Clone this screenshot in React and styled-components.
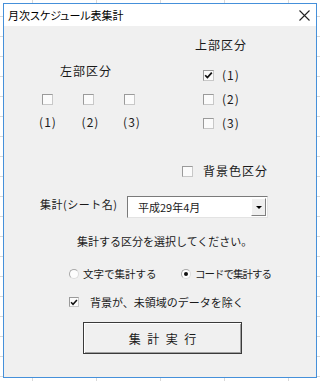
import React from "react";
import styled, { createGlobalStyle } from "styled-components";

const Global = createGlobalStyle`
  html, body {
    margin: 0;
    padding: 0;
    width: 320px;
    height: 381px;
    overflow: hidden;
  }
  body {
    background-color: #ffffff;
    background-image:
      repeating-linear-gradient(to right, transparent 0 32px, #d9d9d9 32px 33px, transparent 33px 64px),
      repeating-linear-gradient(to bottom, transparent 0 16px, #d9d9d9 16px 17px, transparent 17px 20px);
    font-family: "Noto Sans CJK JP", "Noto Sans", sans-serif;
    color: #1a1a1a;
  }
`;

const Window = styled.div`
  margin: 3px 0 0 3px;
  width: 314px;
  height: 375px;
  box-sizing: border-box;
  border: 1px solid #4590da;
  background: #f0f0f0;
  display: flex;
  flex-direction: column;
`;

const TitleBar = styled.div`
  height: 22px;
  flex: none;
  background: #ffffff;
  display: flex;
  align-items: center;
  justify-content: space-between;
  padding: 0 6px 0 4px;
`;

const Title = styled.span`
  font-size: 11px;
  line-height: 14px;
  font-feature-settings: "palt";
  color: #000;
`;

const CloseIcon = styled.svg`
  width: 11px;
  height: 11px;
  display: block;
`;

const Client = styled.div`
  flex: 1;
  display: flex;
  flex-direction: column;
`;

const TopGroups = styled.div`
  height: 109px;
  display: flex;
  align-items: flex-start;
  flex: none;
`;

const LeftGroup = styled.div`
  margin: 37px 0 0 23px;
  width: 123px;
  display: flex;
  flex-direction: column;
`;

const RightGroup = styled.div`
  margin: 11px 0 0 45px;
  display: flex;
  flex-direction: column;
`;

const Heading = styled.div`
  font-size: 12px;
  letter-spacing: 1px;
  line-height: 16px;
  height: 16px;
  padding-left: ${(p) => p.$pl || 0}px;
  white-space: nowrap;
`;

const CheckGrid = styled.div`
  margin-top: 12px;
  display: grid;
  grid-template-columns: repeat(3, 41px);
  grid-template-rows: 16px 16px;
  row-gap: 7px;
  justify-items: center;
  align-items: center;
`;

const SmallLabel = styled.span`
  font-size: 12px;
  letter-spacing: 1px;
  line-height: 16px;
  padding-left: ${(p) => p.$pl || 0}px;
  white-space: nowrap;
`;

const OptionList = styled.div`
  margin-top: 10px;
  display: flex;
  flex-direction: column;
`;

const OptionRow = styled.div`
  height: 24px;
  display: flex;
  align-items: center;
  gap: 8px;
  padding-left: 8px;
`;

const Row = styled.div`
  flex: none;
  height: ${(p) => p.$h}px;
  margin-top: ${(p) => p.$mt}px;
  padding-left: ${(p) => p.$pl}px;
  display: flex;
  align-items: center;
  gap: ${(p) => p.$gap || 0}px;
`;

const BoxEl = styled.span`
  flex: none;
  width: ${(p) => p.$size || 11}px;
  height: ${(p) => p.$size || 11}px;
  box-sizing: border-box;
  border: 1px solid #9a9a9a;
  border-right-color: #c8c8c8;
  border-bottom-color: #c8c8c8;
  background: #fbfbfb;
  display: flex;
  align-items: center;
  justify-content: center;
`;

const CheckSvg = styled.svg`
  width: 9px;
  height: 9px;
  display: block;
`;

function CheckBox({ checked, size }) {
  return (
    <BoxEl $size={size}>
      {checked && (
        <CheckSvg viewBox="0 0 9 9">
          <path d="M1.2 4.2 L3.4 6.6 L7.8 1.6" fill="none" stroke="#111" strokeWidth="1.7" />
        </CheckSvg>
      )}
    </BoxEl>
  );
}

const RadioEl = styled.span`
  flex: none;
  width: 10px;
  height: 10px;
  box-sizing: border-box;
  border-radius: 50%;
  border: 1px solid #a8a8a8;
  border-right-color: #dcdcdc;
  border-bottom-color: #dcdcdc;
  background: #fdfdfd;
  display: flex;
  align-items: center;
  justify-content: center;
  &::after {
    content: "";
    width: 4px;
    height: 4px;
    border-radius: 50%;
    background: ${(p) => (p.$on ? "#111" : "transparent")};
  }
`;

const RadioItem = styled.label`
  display: flex;
  align-items: center;
  gap: 4px;
  width: ${(p) => (p.$w ? `${p.$w}px` : "auto")};
`;

const Text = styled.span`
  font-size: ${(p) => p.$fs || 11}px;
  letter-spacing: ${(p) => p.$ls || 0}px;
  line-height: 16px;
  white-space: nowrap;
`;

const SheetLabel = styled.span`
  width: 87px;
  font-size: 11px;
  letter-spacing: 0.5px;
  line-height: 16px;
  margin-bottom: 6px;
  white-space: nowrap;
`;

const Combo = styled.div`
  width: 141px;
  height: 22px;
  box-sizing: border-box;
  border: 1px solid #7a7a7a;
  border-right-color: #e3e3e3;
  border-bottom-color: #e3e3e3;
  background: #ffffff;
  display: flex;
  align-items: center;
  justify-content: space-between;
  padding: 0 1px 0 10px;
`;

const ComboText = styled.span`
  font-size: 11px;
  line-height: 16px;
  white-space: nowrap;
`;

const DropButton = styled.span`
  width: 15px;
  height: 18px;
  box-sizing: border-box;
  background: #f0f0f0;
  border: 1px solid #ffffff;
  border-right-color: #808080;
  border-bottom-color: #808080;
  display: flex;
  align-items: center;
  justify-content: center;
  &::after {
    content: "";
    width: 0;
    height: 0;
    border-left: 3px solid transparent;
    border-right: 3px solid transparent;
    border-top: 3px solid #000;
    margin-top: 1px;
  }
`;

const RunButton = styled.button`
  width: 159px;
  height: 32px;
  box-sizing: border-box;
  border: 1px solid #3a3a3a;
  box-shadow: inset 1px 1px 0 #ffffff, inset -1px -1px 0 #a0a0a0;
  background: #f0f0f0;
  font-family: "Noto Sans CJK JP", "Noto Sans", sans-serif;
  font-size: 12px;
  letter-spacing: 6.5px;
  padding: 0 0 0 6.5px;
  color: #1a1a1a;
  cursor: pointer;
`;

export default function App() {
  return (
    <>
      <Global />
      <Window>
        <TitleBar>
          <Title>月次スケジュール表集計</Title>
          <CloseIcon viewBox="0 0 11 11">
            <path d="M0.5 0.5 L10.5 10.5 M10.5 0.5 L0.5 10.5" stroke="#222" strokeWidth="1.1" fill="none" />
          </CloseIcon>
        </TitleBar>
        <Client>
          <TopGroups>
            <LeftGroup>
              <Heading $pl={33}>左部区分</Heading>
              <CheckGrid>
                <CheckBox />
                <CheckBox />
                <CheckBox />
                <SmallLabel $pl={1}>(1)</SmallLabel>
                <SmallLabel $pl={4}>(2)</SmallLabel>
                <SmallLabel $pl={5}>(3)</SmallLabel>
              </CheckGrid>
            </LeftGroup>
            <RightGroup>
              <Heading>上部区分</Heading>
              <OptionList>
                <OptionRow>
                  <CheckBox checked />
                  <SmallLabel>(1)</SmallLabel>
                </OptionRow>
                <OptionRow>
                  <CheckBox />
                  <SmallLabel>(2)</SmallLabel>
                </OptionRow>
                <OptionRow>
                  <CheckBox />
                  <SmallLabel>(3)</SmallLabel>
                </OptionRow>
              </OptionList>
            </RightGroup>
          </TopGroups>

          <Row $h={20} $mt={26} $pl={178} $gap={10}>
            <CheckBox />
            <Text $fs={12} $ls={1}>背景色区分</Text>
          </Row>

          <Row $h={22} $mt={15} $pl={36}>
            <SheetLabel>集計(シート名)</SheetLabel>
            <Combo>
              <ComboText>平成29年4月</ComboText>
              <DropButton />
            </Combo>
          </Row>

          <Row $h={16} $mt={15} $pl={73}>
            <Text $fs={11}>集計する区分を選択してください。</Text>
          </Row>

          <Row $h={20} $mt={15} $pl={65}>
            <RadioItem $w={112}>
              <RadioEl />
              <Text $fs={10.5}>文字で集計する</Text>
            </RadioItem>
            <RadioItem>
              <RadioEl $on />
              <Text $fs={10.5} $ls={-1}>コードで集計する</Text>
            </RadioItem>
          </Row>

          <Row $h={20} $mt={8} $pl={65} $gap={11}>
            <CheckBox checked size={10} />
            <Text $fs={11}>背景が、未領域のデータを除く</Text>
          </Row>

          <Row $h={32} $mt={10} $pl={79}>
            <RunButton>集計実行</RunButton>
          </Row>
        </Client>
      </Window>
    </>
  );
}
